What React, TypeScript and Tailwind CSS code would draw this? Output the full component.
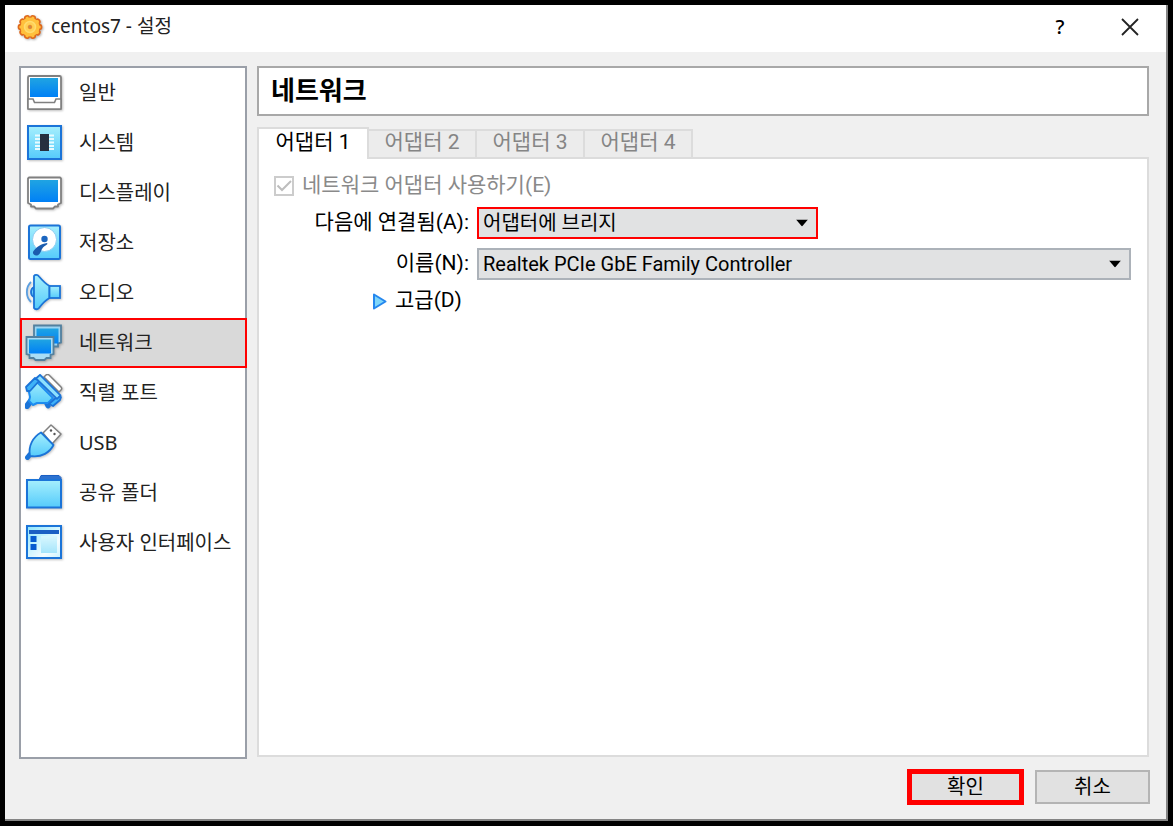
import React, { useState } from 'react';

interface NavItem {
  label: string;
  icon: React.ReactNode;
}

const BLUE = '#1b74d8';
const DARK = '#1b5fc4';

function Icon({ children }: { children: React.ReactNode }) {
  return (
    <svg width="38" height="38" viewBox="0 0 38 38" fill="none" className="shrink-0 drop-shadow-[1px_1px_1px_rgba(0,0,0,0.25)]" aria-hidden="true">
      {children}
    </svg>
  );
}

const NAV_ITEMS: NavItem[] = [
  {
    label: '일반',
    icon: (
      <Icon>
        <rect x="3" y="2" width="33" height="33" rx="1.5" fill="#fff" stroke="#808080" strokeWidth="1.8" />
        <rect x="5" y="4" width="28" height="19" fill="url(#screen)" />
        <path d="M3 25h5l1.5 3.500h20l1.500-3.500h5v10H3z" fill="#fff" stroke="#808080" strokeWidth="1.6" />
      </Icon>
    ),
  },
  {
    label: '시스템',
    icon: (
      <Icon>
        <rect x="3" y="2" width="33" height="33" fill="url(#aqua)" stroke={BLUE} strokeWidth="2" />
        <path d="M10 11.5h19M10 15h19M10 18.5h19M10 22h19M10 25h19" stroke="#e8fbff" strokeWidth="1.8" />
        <rect x="15" y="10" width="9" height="17" fill="#26303f" />
      </Icon>
    ),
  },
  {
    label: '디스플레이',
    icon: (
      <Icon>
        <path d="M4 3.5h31l1 1V29l-3 1.500v2h-3l-2 2H11l-2-2H6v-2L3 29V4.500z" fill="#fff" stroke="#808080" strokeWidth="1.8" strokeLinejoin="round" />
        <rect x="5" y="6" width="28" height="22" fill="url(#screen)" />
      </Icon>
    ),
  },
  {
    label: '저장소',
    icon: (
      <Icon>
        <rect x="4" y="1.500" width="31" height="33.500" rx="1.500" fill="url(#aqua)" stroke={BLUE} strokeWidth="2" />
        <circle cx="19.500" cy="15.500" r="12" fill="#fff" stroke="#8bcdf2" strokeWidth="1" />
        <path d="M22 19c-6 1-10 3.500-13.500 8-1.500 2 .5 5 3.500 4.500s4-4.500 5-6.500c1-2 3.500-3.500 5.500-5z" fill="#1b5cae" />
        <circle cx="19.500" cy="15" r="3.200" fill="#1b66c0" />
      </Icon>
    ),
  },
  {
    label: '오디오',
    icon: (
      <Icon>
        <path d="M6 8C.5 13 .5 23 6 28" stroke="#5a9ee0" strokeWidth="1.800" />
        <path d="M9 13c-4 2-4 8 0 10z" fill="#6fd0fa" stroke={BLUE} strokeWidth="1.800" />
        <path d="M9 2c1-1.500 3.500-1.500 5 .5 3 3.500 6 7 10.500 9.500v12c-4.500 2.500-7.500 6-10.500 10-1.500 1.800-4 1.500-5 0z" fill="url(#aqua)" stroke={BLUE} strokeWidth="1.800" strokeLinejoin="round" />
        <rect x="24.500" y="12" width="10.500" height="12" fill="url(#aqua)" stroke={BLUE} strokeWidth="1.800" />
      </Icon>
    ),
  },
  {
    label: '네트워크',
    icon: (
      <Icon>
        <path d="M9 1.500h27v17l-3 1v3h-4l-2 2H12l-3-3z" fill="#9cd4f2" stroke="#52809f" strokeWidth="1.800" />
        <rect x="11.500" y="4.500" width="22" height="15" fill="url(#screen)" />
        <path d="M1.500 13h27v17l-3 1v3h-4l-2 2h-9l-2-2H4.500v-3l-3-1z" fill="#a9dcf5" stroke="#52809f" strokeWidth="1.800" />
        <rect x="4" y="15.500" width="22" height="14" fill="url(#screen)" />
      </Icon>
    ),
  },
  {
    label: '직렬 포트',
    icon: (
      <Icon>
        <path d="M19 3l2-2c1-.8 2-.8 3 0l12 12c1 1 1 2 0 3l-2 2z" fill="#fff" stroke="#808080" strokeWidth="1.500" />
        <path d="M5 28l-3 4" stroke={BLUE} strokeWidth="6" strokeLinecap="round" />
        <path d="M21 28l2 4" stroke={BLUE} strokeWidth="5" strokeLinecap="round" />
        <path d="M10 6l18 18-5 5H12l-4 2-4-4 1-4-2-10z" fill="url(#aqua)" stroke="#1d8cf0" strokeWidth="2" strokeLinejoin="round" />
        <path d="M1 13l9-9 4 3L5 17H2z" fill="#3fb2f8" stroke={BLUE} strokeWidth="1.800" strokeLinejoin="round" />
        <path d="M24 30l9-8 3 1-1 3-7 6z" fill="#3fb2f8" stroke={BLUE} strokeWidth="1.800" strokeLinejoin="round" />
        <path d="M15 .8l20.500 20.500-3.500 3.500L11 4.500z" fill="#8ee0fd" stroke={BLUE} strokeWidth="1.800" strokeLinejoin="round" />
      </Icon>
    ),
  },
  {
    label: 'USB',
    icon: (
      <Icon>
        <path d="M18 9l8-8 10 9-9 10z" fill="#fff" stroke="#808080" strokeWidth="1.500" strokeLinejoin="round" />
        <circle cx="26" cy="6.500" r="1.200" fill="#555" />
        <circle cx="29.500" cy="10" r="1.200" fill="#555" />
        <path d="M4.500 31L2.500 33.500" stroke={BLUE} strokeWidth="5" strokeLinecap="round" />
        <path d="M16 8.500L28.500 21C25 28 17 34 5 32 3 22 8 13 16 8.500z" fill="url(#aqua)" stroke={BLUE} strokeWidth="1.800" strokeLinejoin="round" />
      </Icon>
    ),
  },
  {
    label: '공유 폴더',
    icon: (
      <Icon>
        <path d="M14 6l2-4.500h18l2 2V6H14z" fill="#2c72d0" stroke={DARK} strokeWidth="1" />
        <rect x="2" y="6" width="34" height="27.500" fill="url(#aqua)" stroke={BLUE} strokeWidth="2" />
      </Icon>
    ),
  },
  {
    label: '사용자 인터페이스',
    icon: (
      <Icon>
        <rect x="2" y="2" width="34" height="32" fill="url(#window)" stroke={BLUE} strokeWidth="2" />
        <rect x="4" y="6" width="30" height="4" fill={DARK} />
        <rect x="5.500" y="12" width="6" height="6" fill="#075bd0" />
        <rect x="5.500" y="20" width="6" height="6" fill="#075bd0" />
        <rect x="16" y="12" width="16" height="17" fill="url(#pale)" />
      </Icon>
    ),
  },
];

const TABS = ['어댑터 1', '어댑터 2', '어댑터 3', '어댑터 4'];

function Gradients() {
  return (
    <svg width="0" height="0" className="absolute" aria-hidden="true">
      <defs>
        <linearGradient id="screen" x1="0" y1="0" x2="0" y2="1">
          <stop offset="0" stopColor="#20a4e2" />
          <stop offset="1" stopColor="#0080f6" />
        </linearGradient>
        <linearGradient id="aqua" x1="0" y1="0" x2="0" y2="1">
          <stop offset="0" stopColor="#a6effd" />
          <stop offset="1" stopColor="#55cbfb" />
        </linearGradient>
        <linearGradient id="window" x1="0" y1="0" x2="1" y2="1">
          <stop offset="0" stopColor="#8ce6fd" />
          <stop offset="0.700" stopColor="#f4fdff" />
          <stop offset="1" stopColor="#c8f2ff" />
        </linearGradient>
        <linearGradient id="pale" x1="0" y1="0" x2="0" y2="1">
          <stop offset="0" stopColor="#d9f7fe" />
          <stop offset="1" stopColor="#a5e5fb" />
        </linearGradient>
      </defs>
    </svg>
  );
}

function GearIcon() {
  const teeth = [0, 36, 72, 108, 144, 180, 216, 252, 288, 324];
  return (
    <svg width="26" height="26" viewBox="0 0 26 26" className="drop-shadow-[1px_1px_1px_rgba(0,0,0,0.3)]" aria-hidden="true">
      {teeth.map(a => (
        <circle key={a} cx="13" cy="3.800" r="2.400" fill="#ffc03c" stroke="#df691d" strokeWidth="1.600" transform={`rotate(${a + 18} 13 13)`} />
      ))}
      <circle cx="13" cy="13" r="9.600" fill="#ffc03c" />
      <circle cx="13" cy="13" r="5.500" fill="#ffcf55" stroke="#ffdc6e" strokeWidth="1.500" />
      <circle cx="13" cy="13" r="1.800" fill="#c98a4a" stroke="#e8872b" strokeWidth="1" />
    </svg>
  );
}

interface ComboProps {
  id: string;
  value: string;
  className: string;
}

function Combo({ id, value, className }: ComboProps) {
  return (
    <div className={`relative text-xl ${className}`}>
      <select id={id} defaultValue={value} className="block h-full w-full appearance-none bg-transparent pr-8 pb-0.5 pl-1 outline-none">
        <option>{value}</option>
      </select>
      <svg width="12" height="7" viewBox="0 0 12 7" className="pointer-events-none absolute top-1/2 right-2 -translate-y-1/2" aria-hidden="true">
        <path d="M0 0h12L6 7z" fill="#000" />
      </svg>
    </div>
  );
}

export default function App() {
  const [section, setSection] = useState('네트워크');
  const [tab, setTab] = useState(TABS[0]);

  return (
    <div className="flex min-h-screen bg-black p-[5px] font-[Roboto,'Noto_Sans_CJK_KR',sans-serif] text-black">
      <Gradients />
      <div className="flex flex-1 flex-col border-r-2 border-b-2 border-[#858585] bg-[#f0f0f0]">
        {/* Title bar */}
        <header className="flex h-[47px] items-center bg-white pr-6 pb-1 pl-3">
          <GearIcon />
          <h1 className="ml-2 flex-1 font-['Noto_Sans','Noto_Sans_CJK_KR',sans-serif] text-[19px] text-[#222]">centos7 - 설정</h1>
          <button type="button" aria-label="도움말" className="w-8 font-['Noto_Sans',sans-serif] text-xl font-medium">?</button>
          <button type="button" aria-label="닫기" className="ml-[42px] flex w-6 justify-center">
            <svg width="18" height="18" viewBox="0 0 18 18" aria-hidden="true">
              <path d="M1 1l16 16M17 1L1 17" stroke="#222" strokeWidth="1.800" />
            </svg>
          </button>
        </header>

        <div className="flex flex-1 gap-[10px] pt-[14px] pr-[17px] pl-[14px]">
          {/* Sections */}
          <nav className="w-[228px] shrink-0 border-2 border-[#9a9fa8] bg-white">
            {NAV_ITEMS.map(item => (
              <button
                key={item.label}
                type="button"
                onClick={() => setSection(item.label)}
                className={`flex h-[50px] items-center gap-4 text-left font-['Noto_Sans','Noto_Sans_CJK_KR',sans-serif] text-xl whitespace-nowrap text-[#222] ${
                  section === item.label ? '-ml-px w-[227px] border-2 border-[#f00] bg-[#d9d9d9] pl-[3px]' : 'w-full pl-1'
                }`}
              >
                {item.icon}
                {item.label}
              </button>
            ))}
          </nav>

          <main className="flex min-w-0 flex-1 flex-col pb-[2px]">
            <h2 className="flex h-[50px] items-center border-2 border-[#a8a8a8] bg-white px-3 text-[26px] font-bold">{section}</h2>

            {/* Adapter tabs */}
            <div role="tablist" className="mt-[11px] flex items-end text-[21px] leading-none">
              {TABS.map(name => (
                <button
                  key={name}
                  type="button"
                  role="tab"
                  aria-selected={tab === name}
                  onClick={() => setTab(name)}
                  className={
                    tab === name
                      ? 'relative -mb-[2px] h-8 w-[112px] border-2 border-b-0 border-[#dcdcdc] bg-white pb-1'
                      : 'h-7 w-[108px] border-t-2 border-r-2 border-[#dcdcdc] bg-[#ececec] pb-1 text-[#858585]'
                  }
                >
                  {name}
                </button>
              ))}
            </div>

            <form className="flex-1 border-2 border-[#dcdcdc] bg-white pt-[11px] pr-4 pl-[15px] text-[21px]" onSubmit={e => e.preventDefault()}>
              <label className="flex h-8 items-center gap-2 text-[#8a8a8a]">
                <span className="relative h-5 w-5">
                  <input type="checkbox" defaultChecked disabled className="block h-5 w-5 appearance-none border-2 border-[#cccccc] bg-white" />
                  <svg width="20" height="20" viewBox="0 0 20 20" fill="none" className="pointer-events-none absolute inset-0" aria-hidden="true">
                    <path d="M3.500 9.500L8 14l9-9" stroke="#bdbdbd" strokeWidth="2" />
                  </svg>
                </span>
                네트워크 어댑터 사용하기(E)
              </label>

              <div className="mt-[5px] grid grid-cols-[195px_1fr] items-center gap-x-2 gap-y-[9px]">
                <label htmlFor="attached" className="text-right">다음에 연결됨(A):</label>
                <Combo id="attached" value="어댑터에 브리지" className="h-8 w-[341px] border-2 border-[#f00] bg-[#e1e2e3]" />
                <label htmlFor="adapter" className="text-right">이름(N):</label>
                <Combo id="adapter" value="Realtek PCIe GbE Family Controller" className="h-8 border-2 border-[#acb2b9] bg-[#e1e2e3]" />
              </div>

              <button type="button" className="mt-[5px] ml-[98px] flex h-8 items-center gap-2">
                <svg width="15" height="17" viewBox="0 0 15 17" aria-hidden="true">
                  <path d="M2 1.500L13.500 8.500 2 15.500z" fill="#7fd6fa" stroke="#2587ee" strokeWidth="2" strokeLinejoin="round" />
                </svg>
                고급(D)
              </button>
            </form>
          </main>
        </div>

        <footer className="flex h-[60px] items-center justify-end gap-[11px] pr-4 pb-1 text-xl">
          <button type="button" className="h-9 w-[117px] border-5 border-[#f00] bg-[#e1e1e1] leading-none">확인</button>
          <button type="button" className="h-[34px] w-[115px] border-2 border-[#b4b4b4] bg-[#e1e1e1] leading-none">취소</button>
        </footer>
      </div>
    </div>
  );
}
